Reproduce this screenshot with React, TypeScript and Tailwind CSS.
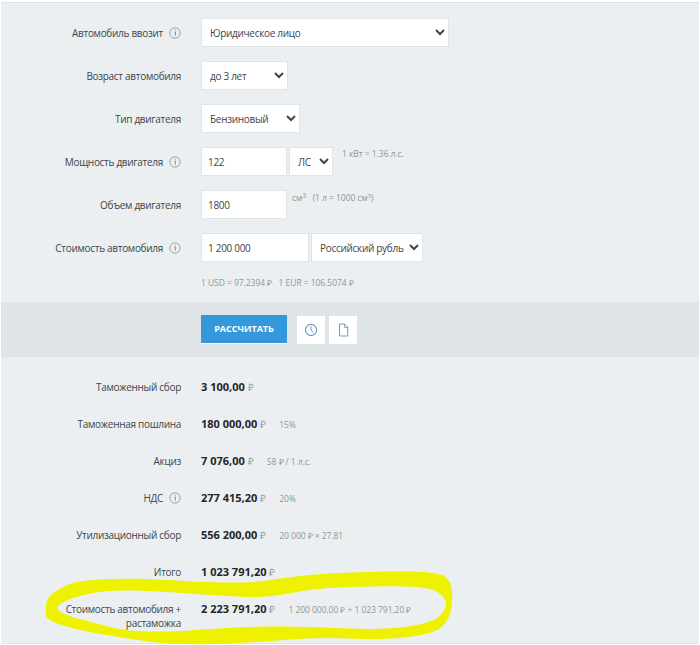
import React from 'react';

const InfoIcon = () => (
  <svg width="12" height="12" viewBox="0 0 12 12" fill="none" className="shrink-0">
    <circle cx="6" cy="6" r="5.2" stroke="#8a9296" strokeWidth="0.8" />
    <path d="M6.3 2.9v.9M5.4 5.1h1v3.6" stroke="#7d8589" strokeWidth="0.9" />
  </svg>
);

const FieldLabel: React.FC<{ text: string; info?: boolean }> = ({ text, info }) => (
  <div className="flex w-[180px] shrink-0 items-center justify-end gap-[6px] text-right text-[10px] leading-[14px] tracking-[-0.3px] text-[#3d4549]">
    <span className="max-w-[130px]">{text}</span>
    {info && <InfoIcon />}
  </div>
);

const controlClass =
  'h-[29px] border border-[#dfe4e6] bg-white text-[10px] tracking-[-0.3px] text-[#3d4549] outline-none';

const Select: React.FC<{ options: string[]; className: string }> = ({ options, className }) => (
  <select className={`${controlClass} pl-[4px] ${className}`} defaultValue={options[0]}>
    {options.map(o => (
      <option key={o}>{o}</option>
    ))}
  </select>
);

const Input: React.FC<{ value: string; className: string }> = ({ value, className }) => (
  <input className={`${controlClass} px-[6px] ${className}`} defaultValue={value} />
);

const FormRow: React.FC<{ label: string; info?: boolean; children: React.ReactNode }> = ({
  label,
  info,
  children,
}) => (
  <div className="flex h-[29px] items-center gap-[20px]">
    <FieldLabel text={label} info={info} />
    <div className="flex h-full items-start gap-[2px]">{children}</div>
  </div>
);

const Hint: React.FC<{ children: React.ReactNode; className?: string }> = ({ children, className }) => (
  <span className={`text-[8.5px] leading-[11px] tracking-[-0.05px] text-[#8d979c] ${className ?? ''}`}>{children}</span>
);

const results = [
  { label: 'Таможенный сбор', value: '3 100,00' },
  { label: 'Таможенная пошлина', value: '180 000,00', note: '15%' },
  { label: 'Акциз', value: '7 076,00', note: '58 ₽ / 1 л.с.' },
  { label: 'НДС', value: '277 415,20', note: '20%', info: true },
  { label: 'Утилизационный сбор', value: '556 200,00', note: '20 000 ₽ × 27.81' },
  { label: 'Итого', value: '1 023 791,20' },
  { label: 'Стоимость автомобиля + растаможка', value: '2 223 791,20', note: '1 200 000,00 ₽ + 1 023 791,20 ₽' },
];

// контур маркера: сглаживаем ломаную через середины отрезков
const smooth = (pts: number[][]) => {
  const mid = (a: number[], b: number[]) => `${(a[0] + b[0]) / 2} ${(a[1] + b[1]) / 2}`;
  const n = pts.length;
  let d = `M${mid(pts[n - 1], pts[0])}`;
  pts.forEach((p, i) => {
    d += `Q${p[0]} ${p[1]} ${mid(p, pts[(i + 1) % n])}`;
  });
  return d + 'Z';
};

const outer = [
  [45, 612], [47, 598], [60, 588], [80, 580], [140, 578], [197, 582], [250, 583], [283, 578], [317, 574],
  [383, 571], [437, 572], [451, 580], [453, 602], [448, 622], [433, 634], [383, 640], [317, 637], [250, 643],
  [173, 645], [123, 638], [73, 629], [47, 620],
];
const inner = [
  [53, 608], [73, 597], [107, 590], [157, 591], [250, 598], [283, 595], [317, 588], [383, 586], [430, 587],
  [445, 597], [447, 608], [433, 623], [383, 630], [317, 627], [250, 626], [173, 632], [125, 631], [95, 623], [68, 616],
];

const App: React.FC = () => (
  <div className="relative h-[645px] w-[700px] overflow-hidden bg-white pt-[2px] pr-[1px] pb-[1px] pl-[1px] font-['Open_Sans',sans-serif]">
    <div className="h-full w-full border-t border-b border-[#dfe5e7] bg-[#ebeff1] pt-[15px]">
      <div className="flex flex-col gap-[14px]">
        <FormRow label="Автомобиль ввозит" info>
          <Select options={['Юридическое лицо']} className="w-[248px]" />
        </FormRow>
        <FormRow label="Возраст автомобиля">
          <Select options={['до 3 лет']} className="w-[87px]" />
        </FormRow>
        <FormRow label="Тип двигателя">
          <Select options={['Бензиновый']} className="w-[99px]" />
        </FormRow>
        <FormRow label="Мощность двигателя" info>
          <Input value="122" className="w-[86px]" />
          <Select options={['ЛС']} className="w-[44px]" />
          <Hint className="ml-[7px] mt-[1px]">1 кВт = 1.36 л.с.</Hint>
        </FormRow>
        <FormRow label="Объем двигателя">
          <Input value="1800" className="w-[86px]" />
          <Hint className="ml-[3px] mt-[2px] whitespace-pre">
            см<sup className="text-[7px]">3</sup>{'   '}(1 л = 1000 см<sup className="text-[6px]">3</sup>)
          </Hint>
        </FormRow>
        <FormRow label="Стоимость автомобиля" info>
          <Input value="1 200 000" className="w-[108px]" />
          <Select options={['Российский рубль']} className="w-[112px]" />
        </FormRow>
      </div>
      <div className="mt-[15px] pl-[200px]">
        <Hint className="block whitespace-pre">1 USD = 97.2394 ₽   1 EUR = 106.5074 ₽</Hint>
      </div>
      <div className="mt-[14px] flex h-[55px] items-center bg-[#dfe5e7] pl-[200px]">
        <button className="h-[29px] w-[86px] border-b border-[#f4f8fa] bg-[#3498db] text-[9px] font-bold text-white">
          РАССЧИТАТЬ
        </button>
        <button className="ml-[10px] flex h-[28px] w-[28px] items-center justify-center bg-white">
          <svg width="14" height="14" viewBox="0 0 14 14" fill="none">
            <circle cx="7" cy="7" r="5.6" stroke="#5b9bd0" strokeWidth="1.1" />
            <path d="M7 3.4V7l2.4 2.6" stroke="#6b86a8" strokeWidth="0.9" />
          </svg>
        </button>
        <button className="ml-[4px] flex h-[28px] w-[28px] items-center justify-center bg-white">
          <svg width="11" height="14" viewBox="0 0 11 14" fill="none">
            <path d="M1.5 1h5.2L9.7 4.2V13h-8.2z" stroke="#6b8fb5" strokeWidth="0.9" />
            <path d="M6.5 1v3.4h3.2" stroke="#6b8fb5" strokeWidth="0.8" />
          </svg>
        </button>
      </div>
      <div className="flex flex-col pt-[23px]">
        {results.map(r => (
          <div key={r.label} className="flex h-[37px] items-start gap-[20px]">
            <FieldLabel text={r.label} info={r.info} />
            <div className="flex items-baseline whitespace-pre leading-[14px]">
              <span className="text-[11px] font-bold text-[#1f2529]">{r.value}</span>
              <span className="ml-[3px] text-[10px] text-[#9aa3a8]">₽</span>
              {r.note && <span className="ml-[13px] text-[8.5px] tracking-[-0.05px] text-[#8d979c]">{r.note}</span>}
            </div>
          </div>
        ))}
      </div>
    </div>
    {/* маркер поверх скриншота */}
    <svg className="absolute top-0 left-0" width="700" height="645">
      <path d={smooth(outer) + smooth(inner)} fill="#eef200" fillRule="evenodd" />
    </svg>
  </div>
);

export default App;
